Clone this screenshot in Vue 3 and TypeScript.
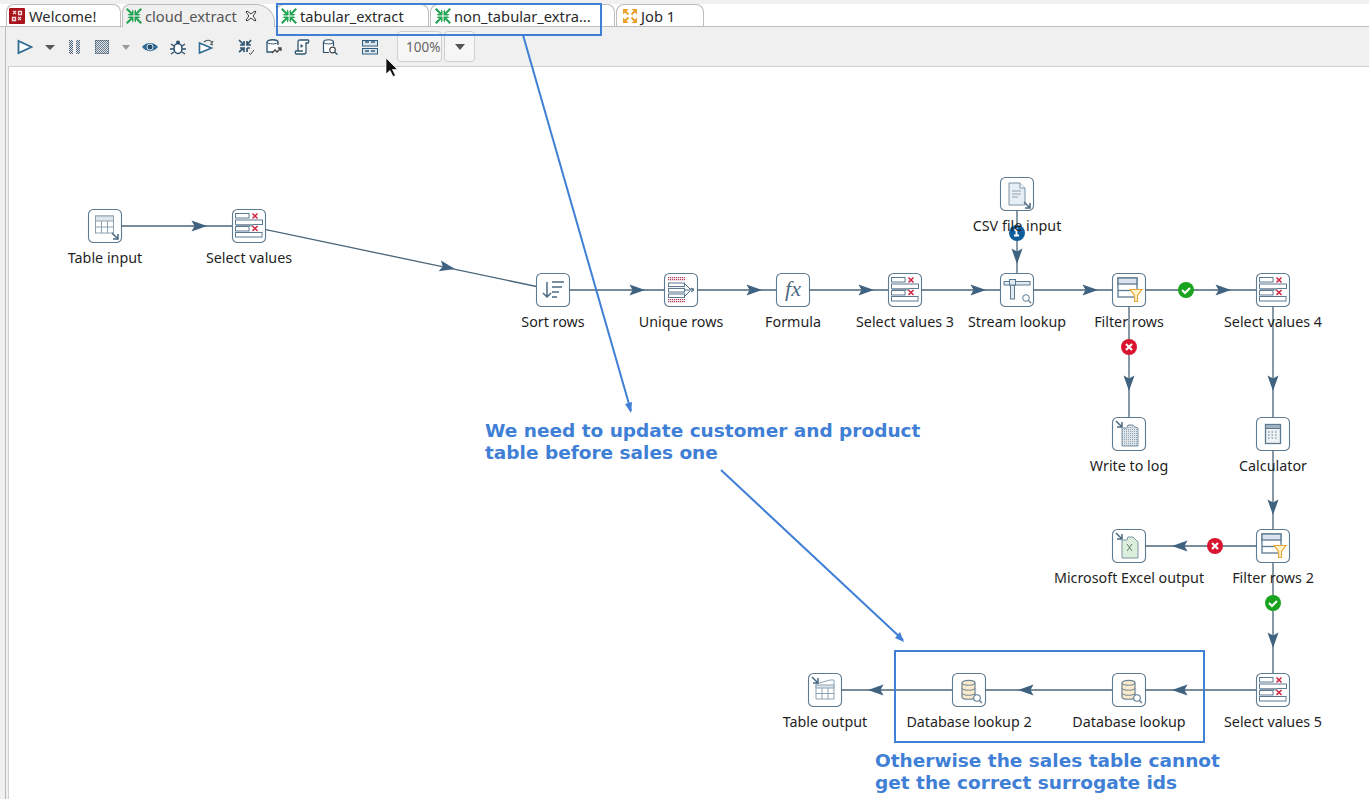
<script setup lang="ts">
interface StepNode {
  id: string;
  x: number;
  y: number;
  label: string;
  icon: string;
}

interface Hop {
  from: string;
  to: string;
  // arrow tip, in page coordinates
  tip: [number, number];
  badge?: { x: number; y: number; kind: "ok" | "err" | "info" };
}

const nodes: StepNode[] = [
  { id: "tableIn", x: 105, y: 226, label: "Table input", icon: "table-in" },
  { id: "sel1", x: 249, y: 226, label: "Select values", icon: "select" },
  { id: "sort", x: 553, y: 290, label: "Sort rows", icon: "sort" },
  { id: "uniq", x: 681, y: 290, label: "Unique rows", icon: "unique" },
  { id: "formula", x: 793, y: 290, label: "Formula", icon: "formula" },
  { id: "sel3", x: 905, y: 290, label: "Select values 3", icon: "select" },
  { id: "stream", x: 1017, y: 290, label: "Stream lookup", icon: "stream" },
  { id: "csv", x: 1017, y: 194, label: "CSV file input", icon: "csv" },
  { id: "filter", x: 1129, y: 290, label: "Filter rows", icon: "filter" },
  { id: "sel4", x: 1273, y: 290, label: "Select values 4", icon: "select" },
  { id: "log", x: 1129, y: 434, label: "Write to log", icon: "log" },
  { id: "calc", x: 1273, y: 434, label: "Calculator", icon: "calc" },
  { id: "filter2", x: 1273, y: 546, label: "Filter rows 2", icon: "filter" },
  { id: "excel", x: 1129, y: 546, label: "Microsoft Excel output", icon: "excel" },
  { id: "sel5", x: 1273, y: 690, label: "Select values 5", icon: "select" },
  { id: "db1", x: 1129, y: 690, label: "Database lookup", icon: "db" },
  { id: "db2", x: 969, y: 690, label: "Database lookup 2", icon: "db" },
  { id: "tableOut", x: 825, y: 690, label: "Table output", icon: "table-out" }
];

const hops: Hop[] = [
  { from: "tableIn", to: "sel1", tip: [207, 226] },
  { from: "sel1", to: "sort", tip: [455, 269] },
  { from: "sort", to: "uniq", tip: [645, 290] },
  { from: "uniq", to: "formula", tip: [762, 290] },
  { from: "formula", to: "sel3", tip: [874, 290] },
  { from: "sel3", to: "stream", tip: [986, 290] },
  { from: "csv", to: "stream", tip: [1017, 264], badge: { x: 1017, y: 233, kind: "info" } },
  { from: "stream", to: "filter", tip: [1098, 290] },
  { from: "filter", to: "sel4", tip: [1231, 290], badge: { x: 1186, y: 290, kind: "ok" } },
  { from: "filter", to: "log", tip: [1129, 391], badge: { x: 1129, y: 347, kind: "err" } },
  { from: "sel4", to: "calc", tip: [1273, 391] },
  { from: "calc", to: "filter2", tip: [1273, 515] },
  { from: "filter2", to: "excel", tip: [1172, 546], badge: { x: 1215, y: 546, kind: "err" } },
  { from: "filter2", to: "sel5", tip: [1273, 648], badge: { x: 1273, y: 603, kind: "ok" } },
  { from: "sel5", to: "db1", tip: [1172, 690] },
  { from: "db1", to: "db2", tip: [1018, 690] },
  { from: "db2", to: "tableOut", tip: [868, 690] }
];

const byId = new Map(nodes.map((n) => [n.id, n]));

function hopLine(h: Hop) {
  const a = byId.get(h.from)!;
  const b = byId.get(h.to)!;
  return { x1: a.x, y1: a.y, x2: b.x, y2: b.y };
}

function arrowTransform(h: Hop): string {
  const a = byId.get(h.from)!;
  const b = byId.get(h.to)!;
  const deg = (Math.atan2(b.y - a.y, b.x - a.x) * 180) / Math.PI;
  return `translate(${h.tip[0]} ${h.tip[1]}) rotate(${deg})`;
}
</script>

<template>
  <div class="page">
    <div class="tabs">
      <div class="tab tab-welcome">
        <svg class="tab-icon" viewBox="0 0 16 16">
          <rect width="16" height="16" rx="1" fill="#a8141c" />
          <path d="M4 3l3 3M7 3L4 6M9.500 3.500h3v3h-3zM3.500 9.500h3v3h-3zM9 9l3 3M12 9l-3 3" fill="none" stroke="#f4dcdc" stroke-width="1.300" />
        </svg>
        <span>Welcome!</span>
      </div>
      <div class="tab tab-cloud active">
        <svg class="tab-icon" viewBox="0 0 16 16"><use href="#trans-arrows" /></svg>
        <span class="dim">cloud_extract</span>
        <svg class="close" viewBox="0 0 12 12">
          <path d="M2 1l4 3 4-3 1 1-3 4 3 4-1 1-4-3-4 3-1-1 3-4-3-4z" fill="#fff" stroke="#333" stroke-width="1" />
        </svg>
      </div>
      <div class="tab tab-tabular">
        <svg class="tab-icon" viewBox="0 0 16 16"><use href="#trans-arrows" /></svg>
        <span>tabular_extract</span>
      </div>
      <div class="tab tab-non">
        <svg class="tab-icon" viewBox="0 0 16 16"><use href="#trans-arrows" /></svg>
        <span>non_tabular_extra...</span>
      </div>
      <div class="tab tab-job">
        <svg class="tab-icon" viewBox="0 0 16 16">
          <g fill="#eda02c">
            <path d="M1 1h5.500L1 6.500zM15 1H9.500L15 6.500zM1 15h5.500L1 9.500zM15 15H9.500L15 9.500z" />
          </g>
          <path d="M3 3l3.500 3.500M13 3L9.500 6.500M3 13l3.500-3.500M13 13L9.500 9.500" stroke="#eda02c" stroke-width="2" />
        </svg>
        <span>Job 1</span>
      </div>
    </div>

    <div class="toolbar">
      <svg class="tool" viewBox="0 0 16 16"><path d="M1.500 2l13 6-13 6z" fill="#fff" stroke="#2f6b94" stroke-width="1.800" /></svg>
      <svg class="caret wide" viewBox="0 0 10 16"><path d="M0 6h10l-5 5z" fill="#555" /></svg>
      <svg class="tool pause" viewBox="0 0 15 16">
        <path d="M2 1h4v14H2zM9 1h4v14H9z" fill="#54677a" />
        <path d="M2 1h4v14H2zM9 1h4v14H9z" fill="url(#hatch)" />
      </svg>
      <svg class="tool" viewBox="0 0 16 16">
        <rect x="1.500" y="1.500" width="13" height="13" fill="#6b7d8b" stroke="#54677a" />
        <rect x="1.500" y="1.500" width="13" height="13" fill="url(#hatch)" />
      </svg>
      <svg class="caret" viewBox="0 0 8 16"><path d="M0 6h8l-4 5z" fill="#999" /></svg>
      <svg class="tool" viewBox="0 0 16 16">
        <path d="M0 8c4-5.500 12-5.500 16 0-4 5.500-12 5.500-16 0z" fill="#2f6b94" />
        <circle cx="8" cy="8" r="3" fill="#2a4f6c" stroke="#dfe8ee" />
      </svg>
      <svg class="tool" viewBox="0 0 16 16">
        <ellipse cx="8" cy="9.500" rx="4" ry="5" fill="#fff" stroke="#2a4f6c" stroke-width="1.500" />
        <circle cx="8" cy="3.500" r="2" fill="#2a4f6c" />
        <path d="M1 5l3 2M15 5l-3 2M0 10h4M16 10h-4M1 15l3-2M15 15l-3-2" stroke="#2a4f6c" stroke-width="1.300" />
      </svg>
      <svg class="tool" viewBox="0 0 16 16">
        <path d="M1.500 4l12 5-12 5z" fill="#fff" stroke="#2f6b94" stroke-width="1.600" />
        <path d="M6 3c3-3 7-2 8 1l1-2M15 6l-3-1" fill="none" stroke="#455" stroke-width="1.100" />
      </svg>
      <svg class="tool group-start" viewBox="0 0 16 16">
        <path d="M1 1l5 5M6 2v4H2M13 1L9 6M9 2v4h4M1 13l5-4M6 13V9H2M9 9v4M9 9h3" fill="none" stroke="#2f5570" stroke-width="1.700" />
        <path d="M11 14l1.500 1.500L16 11" fill="none" stroke="#444" />
      </svg>
      <svg class="tool" viewBox="0 0 16 16">
        <path d="M7 13H1V3c0-3 11-3 11 0v3" fill="#fff" stroke="#2f5570" stroke-width="1.300" />
        <path d="M1 3c0 2.500 11 2.500 11 0" fill="none" stroke="#2f5570" />
        <path d="M6 14l3-3 2 2 4-4M12 9h3v3" fill="none" stroke="#444" stroke-width="1.300" />
      </svg>
      <svg class="tool" viewBox="0 0 16 16">
        <path d="M4 12V3c0-2 1-2 2-2h8c1 0 1 2 0 3h-2v9c0 2-1 2-2 2H2c-1 0-1-3 0-3h7" fill="#fff" stroke="#2f5570" stroke-width="1.300" />
        <path d="M6.500 5l3 2-3 2z" fill="#2f5570" />
      </svg>
      <svg class="tool" viewBox="0 0 16 16">
        <path d="M7 13.500H1.500V3c0-3 10-3 10 0v4" fill="#fff" stroke="#2f5570" stroke-width="1.200" />
        <path d="M1.500 3c0 2.500 10 2.500 10 0" fill="none" stroke="#2f5570" />
        <circle cx="10.500" cy="11" r="2.800" fill="#fff" stroke="#444" stroke-width="1.200" />
        <path d="M12.500 13l3 2.500" stroke="#2f5570" stroke-width="1.500" />
      </svg>
      <svg class="tool group-start" viewBox="0 0 16 16">
        <g fill="#dfe7ee" stroke="#2f5f80">
          <rect x="0.500" y="1.500" width="15" height="5.500" />
          <rect x="0.500" y="9.500" width="15" height="5.500" />
        </g>
        <path d="M3 3h4M9 3h4M3 12h4M9 12h4" stroke="#2f5f80" stroke-width="1.500" />
      </svg>
      <div class="zoom-box"><span>100%</span></div>
      <div class="zoom-drop">
        <svg viewBox="0 0 10 6" width="10" height="6"><path d="M0 0h10L5 6z" fill="#555" /></svg>
      </div>
    </div>

    <div class="canvas">
      <svg class="graph" viewBox="9 67 1360 732" width="1360" height="732">
        <defs>
          <pattern id="hatch" width="2" height="2" patternUnits="userSpaceOnUse">
            <rect width="1" height="1" fill="#dfe5ea" />
            <rect x="1" y="1" width="1" height="1" fill="#dfe5ea" />
          </pattern>
          <pattern id="redhatch" width="2" height="2" patternUnits="userSpaceOnUse">
            <rect width="2" height="2" fill="#ecdde2" />
            <rect width="1" height="1" fill="#b8384f" />
          </pattern>
          <pattern id="greyhatch" width="2" height="2" patternUnits="userSpaceOnUse">
            <rect width="2" height="2" fill="#dde5ea" />
            <rect width="1" height="1" fill="#92a4b2" />
          </pattern>
          <g id="trans-arrows" fill="#23a455">
            <path d="M0 1.500L1.500 0 6 4.500V1.500L7.500 3v4.500H3L1.500 6h3zM16 1.500L14.500 0 10 4.500V1.500L8.500 3v4.500H13L14.500 6h-3zM0 14.500L1.500 16 6 11.500v3L7.500 13V8.500H3L1.500 10h3zM16 14.500L14.500 16 10 11.500v3L8.500 13V8.500H13l1.500 1.500h-3z" />
          </g>
          <symbol id="i-select" viewBox="0 0 34 34">
            <rect x="3.500" y="4.500" width="13.500" height="4.500" fill="#fff" stroke="#5c7a92" />
            <path d="M20.500 4.500l5 5M25.500 4.500l-5 5" stroke="#cf2244" stroke-width="1.500" />
            <rect x="3.500" y="11" width="27" height="4.500" fill="#fff" stroke="#5c7a92" />
            <rect x="4" y="15" width="17" height="2.500" fill="#8a9caa" />
            <rect x="3.500" y="17.500" width="13.500" height="4.500" fill="#fff" stroke="#5c7a92" />
            <path d="M20.500 17l5 5M25.500 17l-5 5" stroke="#cf2244" stroke-width="1.500" />
            <rect x="3.500" y="23.500" width="26.500" height="4.500" fill="#fff" stroke="#5c7a92" />
          </symbol>
          <symbol id="i-table-in" viewBox="0 0 34 34">
            <rect x="7.500" y="7" width="18" height="17" fill="#fff" stroke="#8ea2b2" />
            <rect x="7.500" y="7" width="18" height="5" fill="#dde6ed" stroke="#8ea2b2" />
            <path d="M7.500 18h18M13.500 12v12M19.500 12v12" stroke="#8ea2b2" />
            <path d="M24 24l6 6M30 25v5h-5" fill="none" stroke="#4c6a82" stroke-width="1.500" />
          </symbol>
          <symbol id="i-table-out" viewBox="0 0 34 34">
            <path d="M8 11l14-4h4v19H8z" fill="#fff" stroke="#8ea2b2" />
            <rect x="8" y="12" width="18" height="3" fill="#dde6ed" stroke="#8ea2b2" />
            <path d="M8 20.500h18M14 15v11M20 15v11" stroke="#8ea2b2" />
            <path d="M4 4l6 6M10 5v5H5" fill="none" stroke="#4c6a82" stroke-width="1.500" />
          </symbol>
          <symbol id="i-sort" viewBox="0 0 34 34">
            <path d="M11 9v15M7 20l4 4 4-4" fill="none" stroke="#4c6a82" stroke-width="1.500" />
            <path d="M16 9h12M16 14h10M16 19h7M16 24h5" stroke="#4c6a82" stroke-width="1.400" />
          </symbol>
          <symbol id="i-unique" viewBox="0 0 34 34">
            <rect x="4" y="4" width="17" height="4" fill="url(#redhatch)" />
            <rect x="4" y="26" width="17" height="4" fill="url(#redhatch)" />
            <rect x="4" y="9.500" width="17" height="15" fill="#eef2f5" />
            <g fill="#fff" stroke="#5c7a92">
              <rect x="4.500" y="10" width="16" height="3.500" />
              <rect x="4.500" y="15.500" width="16" height="3.500" />
              <rect x="4.500" y="21" width="16" height="3.500" />
            </g>
            <path d="M20 10l6 6h4M20 17h10M20 24l6-6" fill="none" stroke="#4c6a82" />
            <path d="M27 15l3 2-3 2" fill="none" stroke="#4c6a82" />
          </symbol>
          <symbol id="i-stream" viewBox="0 0 34 34">
            <rect x="4" y="8.500" width="26" height="3.500" fill="#e4ebf0" stroke="#5c7a92" />
            <rect x="10.500" y="12" width="4" height="14" fill="#e4ebf0" stroke="#5c7a92" />
            <rect x="9.500" y="6.500" width="6" height="5.500" fill="#e4ebf0" stroke="#5c7a92" />
            <circle cx="26" cy="25" r="3.300" fill="#fff" stroke="#5c7a92" />
            <path d="M28.500 27.500l2.500 2.500" stroke="#5c7a92" stroke-width="1.300" />
          </symbol>
          <symbol id="i-csv" viewBox="0 0 34 34">
            <path d="M9 6h11l5 5v17H9z" fill="#e7eff5" stroke="#7c93a6" />
            <path d="M20 6v5h5" fill="#fff" stroke="#7c93a6" />
            <path d="M12 14h9M12 17h9M12 20h6" stroke="#8ea2b2" />
            <path d="M24 25l6 6M30 26v5h-5" fill="none" stroke="#4c6a82" stroke-width="1.500" />
          </symbol>
          <symbol id="i-filter" viewBox="0 0 34 34">
            <rect x="6" y="5" width="19" height="19" fill="#fff" stroke="#5c7a92" stroke-width="1.300" />
            <rect x="6" y="5" width="19" height="6" fill="#dbe4ec" stroke="#5c7a92" stroke-width="1.300" />
            <path d="M6 17.500h19" stroke="#5c7a92" stroke-width="1.300" />
            <path d="M18 16.500h12l-4.500 6v6h-3v-6z" fill="#fdf2c9" stroke="#eba83a" stroke-width="1.200" />
          </symbol>
          <symbol id="i-log" viewBox="0 0 34 34">
            <path d="M10 11h5l1-3h5l2 2 3 1v18H10z" fill="url(#greyhatch)" stroke="#7c93a6" />
            <path d="M4 4l6 6M10 5v5H5" fill="none" stroke="#4c6a82" stroke-width="1.500" />
          </symbol>
          <symbol id="i-calc" viewBox="0 0 34 34">
            <rect x="9.500" y="7.500" width="15" height="19" fill="#eef2f5" stroke="#5c7a92" stroke-width="1.300" />
            <rect x="9.500" y="7.500" width="15" height="4" fill="#9fb1bf" stroke="#5c7a92" />
            <path d="M12 15h10M12 18h10M12 21h10" stroke="#5c7a92" stroke-width="1" stroke-dasharray="1.500 2" />
          </symbol>
          <symbol id="i-excel" viewBox="0 0 34 34">
            <path d="M10 11h5l1-3h5l5 5v16H10z" fill="#dcefdc" stroke="#7c93a6" />
            <path d="M15 15l5 7M20 15l-5 7" stroke="#5c7a6a" />
            <path d="M4 4l6 6M10 5v5H5" fill="none" stroke="#4c6a82" stroke-width="1.500" />
          </symbol>
          <symbol id="i-db" viewBox="0 0 34 34">
            <path d="M10 10c0-3.500 13-3.500 13 0v14c0 3-13 3-13 0z" fill="#fbeacb" stroke="#6c8295" stroke-width="1.200" />
            <path d="M10 10c0 3 13 3 13 0M10 15c0 3 13 3 13 0M10 20c0 3 13 3 13 0" fill="none" stroke="#6c8295" />
            <circle cx="25" cy="25" r="3.300" fill="#fff" stroke="#5c7a92" stroke-width="1.100" />
            <path d="M27.500 27.500l2.500 2.500" stroke="#5c7a92" stroke-width="1.300" />
          </symbol>
        </defs>

        <g v-for="h in hops" :key="`${h.from}-${h.to}`">
          <line v-bind="hopLine(h)" class="hop" />
          <path :transform="arrowTransform(h)" d="M0 0L-15.500-5.500-12.500 0-15.500 5.500z" class="arrow" />
        </g>

        <g v-for="h in hops.filter((x) => x.badge)" :key="`b-${h.from}-${h.to}`">
          <g :transform="`translate(${h.badge!.x} ${h.badge!.y})`">
            <template v-if="h.badge!.kind === 'ok'">
              <circle r="8" fill="#1aa31e" />
              <path d="M-4 0l3 3 5-5" fill="none" stroke="#fff" stroke-width="2" />
            </template>
            <template v-else-if="h.badge!.kind === 'err'">
              <circle r="8" fill="#d9142f" />
              <path d="M-3 -3l6 6M3 -3l-6 6" stroke="#fff" stroke-width="2.200" />
            </template>
            <template v-else>
              <circle r="8" fill="#0f5e9c" />
              <path d="M-2.500 -2.500l2-1.500v6M-3 2.500h5" fill="none" stroke="#fff" stroke-width="1.800" />
            </template>
          </g>
        </g>

        <g v-for="n in nodes" :key="n.id" :transform="`translate(${n.x - 17} ${n.y - 17})`">
          <rect x="0.500" y="0.500" width="33" height="33" rx="5" class="node-box" />
          <text v-if="n.icon === 'formula'" x="17" y="23" text-anchor="middle" class="fx">fx</text>
          <use v-else :href="`#i-${n.icon}`" width="34" height="34" />
          <text x="17" y="54" text-anchor="middle" class="node-label">{{ n.label }}</text>
        </g>
      </svg>
    </div>

    <!-- annotations are drawn over tabs and canvas alike -->
    <svg class="notes" viewBox="0 0 1369 799" width="1369" height="799">
      <rect x="277" y="4" width="324" height="31" class="note-line" />
      <line x1="523" y1="35" x2="631" y2="411" class="note-line" />
      <path d="M631 413l-6-9 7-2z" class="note-head" />
      <line x1="721" y1="470" x2="903" y2="640" class="note-line" />
      <path d="M904 642l-9-4 5-6z" class="note-head" />
      <rect x="895" y="651" width="309" height="91" class="note-line" />
      <text x="485" y="436.500" class="note-text">We need to update customer and product</text>
      <text x="485" y="458.500" class="note-text">table before sales one</text>
      <text x="875" y="766.500" class="note-text">Otherwise the sales table cannot</text>
      <text x="875" y="788.500" class="note-text">get the correct surrogate ids</text>
      <path d="M386 58v16l4-3.500 3 6 2.500-1-3-6h5z" fill="#111" stroke="#fff" stroke-width="0.700" />
    </svg>
  </div>
</template>

<style>
html,
body {
  margin: 0;
  background: #fff;
}
</style>

<style scoped>
.page {
  position: relative;
  width: 1369px;
  height: 799px;
  overflow: hidden;
  display: flex;
  flex-direction: column;
  background: linear-gradient(90deg, #f0f0f0 5px, #b9b9b9 5px, #b9b9b9 6px, #f0f0f0 6px);
  font-family: "Noto Sans", "Open Sans", sans-serif;
  color: #2a2a2a;
}

.tabs {
  height: 22px;
  padding: 4px 0 0 6px;
  display: flex;
  align-items: stretch;
  background: linear-gradient(#f0f0f0, #f0f0f0 4px, #fff 4px);
  border-bottom: 1px solid #bdbdbd;
  font-size: 14.700px;
  line-height: 20px;
}

.tab {
  box-sizing: border-box;
  display: flex;
  align-items: center;
  background: #fff;
  border: 1px solid #bdbdbd;
  border-bottom: 0;
  border-radius: 8px 8px 0 0;
  margin-right: 1px;
  white-space: nowrap;
}

.tab-icon {
  width: 16px;
  height: 16px;
  margin-right: 3px;
  flex: none;
}

.tab-welcome {
  width: 115px;
  padding-left: 2px;
}

.tab-welcome .tab-icon {
  margin-right: 4px;
}

.tab-cloud {
  width: 153px;
  padding-left: 3px;
}

.tab-tabular {
  width: 153px;
  padding-left: 4px;
}

.tab-non {
  width: 185px;
  padding-left: 4px;
}

.tab-job {
  width: 88px;
  padding-left: 5px;
}

.active {
  background: #f0f0f0;
  position: relative;
  height: 23px;
  border-top-right-radius: 20px 18px;
  z-index: 1;
}

.dim {
  color: #555;
}

.close {
  width: 12px;
  height: 12px;
  margin-left: 8px;
}

.toolbar {
  height: 39px;
  padding-left: 17px;
  display: flex;
  align-items: center;
  gap: 12px;
}

.tool {
  width: 16px;
  height: 16px;
  flex: none;
}

.tool.pause {
  width: 15px;
}

.caret {
  width: 8px;
  height: 16px;
  flex: none;
}

.caret.wide {
  width: 10px;
}

.group-start {
  margin-left: 12px;
}

.zoom-box {
  box-sizing: border-box;
  width: 45px;
  height: 31px;
  margin-left: 7px;
  padding-left: 8px;
  display: flex;
  align-items: center;
  background: #f6f6f6;
  border: 1px solid #cfcfcf;
  border-radius: 4px;
  font-size: 13.500px;
  color: #666;
  white-space: nowrap;
}

.zoom-drop {
  box-sizing: border-box;
  width: 31px;
  height: 31px;
  margin-left: -10px;
  display: flex;
  align-items: center;
  justify-content: center;
  background: #f6f6f6;
  border: 1px solid #cfcfcf;
  border-radius: 4px;
}

.canvas {
  flex: 1;
  margin-left: 8px;
  background: #fff;
  border-top: 1px solid #cfcfcf;
  border-left: 1px solid #cfcfcf;
  overflow: hidden;
}

.graph {
  display: block;
}

.hop {
  stroke: #4a6478;
  stroke-width: 1.300;
}

.arrow {
  fill: #3e6280;
}

.node-box {
  fill: #fff;
  stroke: #5c7a92;
  stroke-width: 1.100;
}

.fx {
  font-family: "Liberation Serif", serif;
  font-style: italic;
  font-size: 22px;
  fill: #4c6a82;
}

.node-label {
  font-size: 14.300px;
  fill: #1f1f1f;
}

.notes {
  position: absolute;
  left: 0;
  top: 0;
  pointer-events: none;
}

.note-line {
  fill: none;
  stroke: #3f7fd6;
  stroke-width: 2;
}

.note-head {
  fill: #3f7fd6;
}

.note-text {
  font-family: "DejaVu Sans", sans-serif;
  font-weight: 700;
  font-size: 18.500px;
  fill: #3f7fd6;
}
</style>
